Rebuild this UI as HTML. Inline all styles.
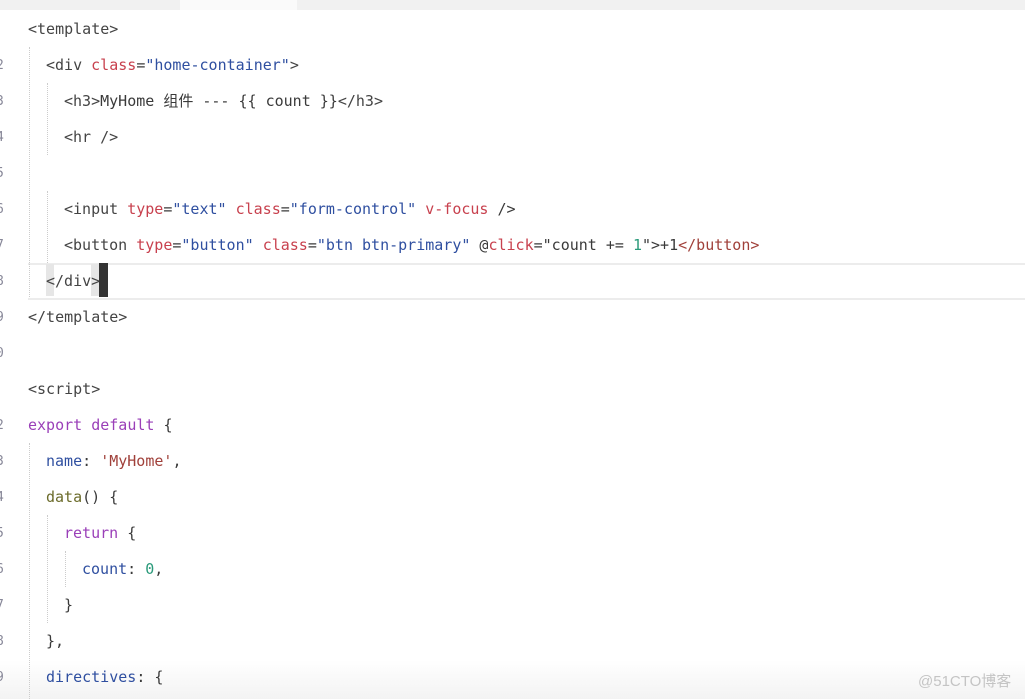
<!DOCTYPE html>
<html><head><meta charset="utf-8"><style>
body{margin:0;width:1025px;height:699px;background:#fff;overflow:hidden;position:relative;font-family:"DejaVu Sans Mono","Noto Sans CJK SC",monospace;font-size:15px;color:#3a3a3a}
.top{position:absolute;left:0;top:0;width:1025px;height:10px;background:#f1f1f1}
.tab{position:absolute;left:180px;top:0;width:117px;height:10px;background:#fafafa}
.hl{position:absolute;left:28px;top:263px;width:997px;height:33px;border-top:2px solid #ececec;border-bottom:2px solid #ececec}
.l{position:absolute;height:36px;line-height:37px;white-space:pre}
.n{position:absolute;left:-4px;color:#889;font-size:13px;height:36px;line-height:37px}
.g{position:absolute;border-left:1px dotted #ccc}
.t{color:#444}.a{color:#c8414e}.s{color:#2f4fa0}.k{color:#9a3fb8}.num{color:#2a9a7a}.str{color:#a0403a}.f{color:#6b6b2a}
.cur{position:absolute;left:99px;top:263px;width:9px;height:34px;background:#333}
.sel{position:absolute;top:264px;width:8px;height:32px;background:#e6e6e6}
.wm{position:absolute;left:918px;top:670px;font-family:"Liberation Sans","Noto Sans CJK SC",sans-serif;font-size:15px;color:#c4c4c4}
.bot{position:absolute;left:0;top:660px;width:1025px;height:39px;background:linear-gradient(#fff,#f3f3f3)}
</style></head><body>
<div class="top"></div><div class="tab"></div>
<div class="bot"></div>
<div class="hl"></div>
<div class="sel" style="left:46px"></div><div class="sel" style="left:91px"></div>
<div class="g" style="left:29px;top:47px;height:250px"></div>
<div class="g" style="left:47px;top:83px;height:72px"></div>
<div class="g" style="left:47px;top:191px;height:72px"></div>
<div class="g" style="left:29px;top:443px;height:256px"></div>
<div class="g" style="left:47px;top:515px;height:108px"></div>
<div class="g" style="left:65px;top:551px;height:36px"></div>
<div class="n" style="top:47px">2</div><div class="n" style="top:83px">3</div><div class="n" style="top:119px">4</div><div class="n" style="top:155px">5</div><div class="n" style="top:191px">6</div><div class="n" style="top:227px">7</div><div class="n" style="top:263px">8</div><div class="n" style="top:299px">9</div><div class="n" style="top:335px">0</div><div class="n" style="top:407px">2</div><div class="n" style="top:443px">3</div><div class="n" style="top:479px">4</div><div class="n" style="top:515px">5</div><div class="n" style="top:551px">6</div><div class="n" style="top:587px">7</div><div class="n" style="top:623px">8</div><div class="n" style="top:659px">9</div>
<div class="l t" style="left:28px;top:11px">&lt;template&gt;</div>
<div class="l" style="left:46px;top:47px"><span class="t">&lt;div </span><span class="a">class</span>=<span class="s">"home-container"</span><span class="t">&gt;</span></div>
<div class="l" style="left:64px;top:83px"><span class="t">&lt;h3&gt;</span>MyHome 组件 --- {{ count }}<span class="t">&lt;/h3&gt;</span></div>
<div class="l t" style="left:64px;top:119px">&lt;hr /&gt;</div>
<div class="l" style="left:64px;top:191px"><span class="t">&lt;input </span><span class="a">type</span>=<span class="s">"text"</span> <span class="a">class</span>=<span class="s">"form-control"</span> <span class="a">v-focus</span> /&gt;</div>
<div class="l" style="left:64px;top:227px"><span class="t">&lt;button </span><span class="a">type</span>=<span class="s">"button"</span> <span class="a">class</span>=<span class="s">"btn btn-primary"</span> @<span class="a">click</span>="count += <span class="num">1</span>"&gt;+1<span class="str">&lt;/button&gt;</span></div>
<div class="l t" style="left:46px;top:263px">&lt;/div&gt;</div>
<div class="cur"></div>
<div class="l t" style="left:28px;top:299px">&lt;/template&gt;</div>
<div class="l t" style="left:28px;top:371px">&lt;script&gt;</div>
<div class="l" style="left:28px;top:407px"><span class="k">export default</span> {</div>
<div class="l" style="left:46px;top:443px"><span class="s">name</span>: <span class="str">'MyHome'</span>,</div>
<div class="l" style="left:46px;top:479px"><span class="f">data</span>() {</div>
<div class="l" style="left:64px;top:515px"><span class="k">return</span> {</div>
<div class="l" style="left:82px;top:551px"><span class="s">count</span>: <span class="num">0</span>,</div>
<div class="l" style="left:64px;top:587px">}</div>
<div class="l" style="left:46px;top:623px">},</div>
<div class="l" style="left:46px;top:659px"><span class="s">directives</span>: {</div>
<div class="wm">@51CTO博客</div>
</body></html>
